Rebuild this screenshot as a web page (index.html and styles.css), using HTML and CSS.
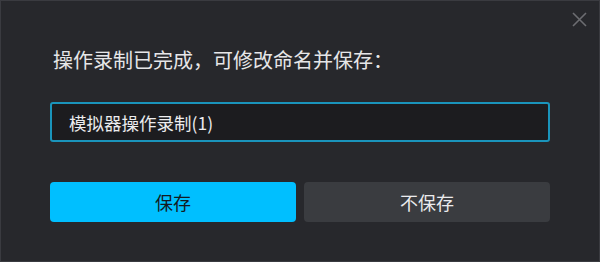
FILE: index.html
```html
<!DOCTYPE html>
<html lang="zh-CN">
<head>
  <meta charset="UTF-8" />
  <title>保存操作录制</title>
  <link rel="stylesheet" href="styles.css">
</head>
<body>

  <div class="dialog">
    <!-- 关闭按钮 -->
    <button class="close" aria-label="关闭">
      <svg width="15" height="15" viewBox="0 0 15 15">
        <path d="M1 1 L14 14 M14 1 L1 14" stroke="#6c6d71" stroke-width="1.6" fill="none" />
      </svg>
    </button>

    <p class="title">操作录制已完成，可修改命名并保存：</p>

    <input class="name-input" type="text" value="模拟器操作录制(1)" />

    <div class="actions">
      <button class="btn btn-primary">保存</button>
      <button class="btn btn-secondary">不保存</button>
    </div>
  </div>

</body>
</html>
```

FILE: styles.css
```css
html, body {
  margin: 0;
  padding: 0;
  background: #27282c;
}

.dialog {
  position: relative;
  box-sizing: border-box;
  width: 600px;
  height: 262px;
  padding: 45px 49px 0;
  background: #27282c;
  border: 1px solid #3a3b40;
  display: flex;
  flex-direction: column;
  font-family: "Noto Sans CJK SC", "Noto Sans", sans-serif;
}

.close {
  position: absolute;
  top: 11px;
  right: 12px;
  width: 15px;
  height: 15px;
  padding: 0;
  border: none;
  background: none;
  cursor: pointer;
}

.close svg {
  display: block;
}

.title {
  margin: 0 0 0 3px;
  font-size: 20px;
  line-height: 28px;
  color: #e6e6e8;
}

.name-input {
  box-sizing: border-box;
  margin-top: 28px;
  width: 100%;
  height: 40px;
  padding: 0 0 0 17px;
  background: #1c1c1f;
  border: 2px solid #1a94bb;
  border-radius: 3px;
  outline: none;
  font-family: inherit;
  font-size: 17.5px;
  color: #ececee;
}

.actions {
  margin-top: 40px;
  display: flex;
  gap: 8px;
}

.btn {
  flex: 1;
  height: 40px;
  border: none;
  border-radius: 4px;
  font-family: inherit;
  font-size: 18px;
  cursor: pointer;
}

.btn-primary {
  background: #00bfff;
  color: #141a20;
}

.btn-secondary {
  background: #3a3c40;
  color: #ebebed;
}
```
